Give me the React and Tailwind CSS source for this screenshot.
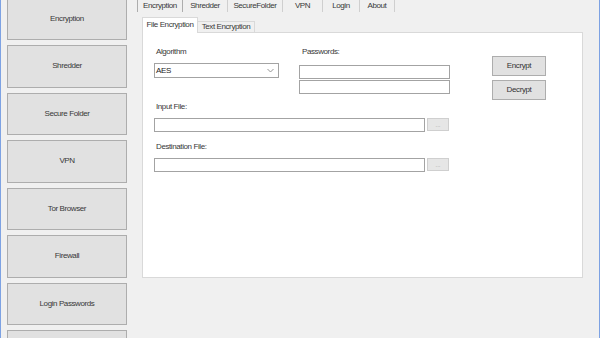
import React from 'react';

const font = { fontFamily: '"Liberation Sans", Arial, sans-serif' };

const sideItems = ['Encryption', 'Shredder', 'Secure Folder', 'VPN', 'Tor Browser', 'Firewall', 'Login Passwords', ''];

const topTabs = [
    { label: 'Encryption', w: 'w-[46px]', active: true },
    { label: 'Shredder', w: 'w-[45px]' },
    { label: 'SecureFolder', w: 'w-[55px]' },
    { label: 'VPN', w: 'w-[40px]' },
    { label: 'Login', w: 'w-[37px]' },
    { label: 'About', w: 'w-[35px]' },
];

const TextBox = ({ className = '' }) => (
    <div className={`h-[14px] bg-white border border-[#a3a3a3] ${className}`} />
);

const BrowseButton = () => (
    <div className="ml-[2px] w-[22px] h-[13px] bg-[#e6e6e6] border border-[#cfcfcf] flex items-center justify-center text-[6px] leading-none text-[#a0a0a0]">
        ...
    </div>
);

const FormButton = ({ children }) => (
    <div className="w-[54px] h-[20px] bg-[#e1e1e1] border border-[#adadad] flex items-center justify-center text-[8px] tracking-[-0.4px] text-[#333]">
        {children}
    </div>
);

const App = () => {
    return (
        <div style={font} className="w-[600px] h-[338px] bg-[#f0f0f0] border-x border-[#7da2e3] flex overflow-hidden text-[#383838]">
            {/* sidebar */}
            <div className="w-[136px] shrink-0 pl-[6px] -mt-[2.5px] flex flex-col gap-[5px]">
                {sideItems.map((item, i) => (
                    <div key={i} className="w-[120px] h-[42.5px] shrink-0 bg-[#e1e1e1] border border-[#adadad] flex items-center justify-center text-[8px] tracking-[-0.4px]">
                        {item}
                    </div>
                ))}
            </div>

            {/* main tab control */}
            <div className="flex-1 flex flex-col">
                <div className="h-[12px] flex">
                    {topTabs.map((t) => (
                        <div
                            key={t.label}
                            className={`${t.w} h-[12px] flex items-center justify-center text-[8px] tracking-[-0.4px] ${
                                t.active ? 'border-l border-r border-[#adadad] bg-[#f0f0f0]' : 'border-r border-[#cfcfcf]'
                            }`}
                        >
                            {t.label}
                        </div>
                    ))}
                </div>

                <div className="pl-[5px] pt-[5px]">
                    {/* inner tabs */}
                    <div className="flex items-end h-[16px] relative z-10">
                        <div className="w-[56px] h-[16px] bg-white border border-b-0 border-[#d9d9d9] flex items-center justify-center text-[8px] tracking-[-0.4px] pb-px">
                            File Encryption
                        </div>
                        <div className="w-[57px] h-[12px] bg-[#f0f0f0] border border-l-0 border-[#d9d9d9] flex items-center justify-center text-[8px] tracking-[-0.4px]">
                            Text Encryption
                        </div>
                    </div>

                    {/* tab page */}
                    <div className="-mt-px w-[441px] h-[246px] bg-white border border-[#d9d9d9] pl-[11px] pt-[13px]">
                        <div className="flex">
                            <div className="w-[125px]">
                                <div className="h-[12px] pl-[2px] flex items-center text-[8px] tracking-[-0.4px]">Algorithm</div>
                                <div className="mt-[5px] h-[15px] border border-[#a3a3a3] bg-white flex items-center justify-between pl-[1px] pr-[4px]">
                                    <span className="text-[8px] tracking-[-0.3px] text-[#222]">AES</span>
                                    <svg width="7" height="5" viewBox="0 0 7 5" fill="none">
                                        <path d="M0.5 1 L3.5 4 L6.5 1" stroke="#8a8a8a" strokeWidth="0.9" />
                                    </svg>
                                </div>
                            </div>

                            <div className="ml-[20px] w-[151px]">
                                <div className="h-[12px] pl-[3px] flex items-center text-[8px] tracking-[-0.4px]">Passwords:</div>
                                <TextBox className="mt-[7px]" />
                                <TextBox className="mt-[1px]" />
                            </div>

                            <div className="ml-[42px] pt-[10px] flex flex-col gap-[4px]">
                                <FormButton>Encrypt</FormButton>
                                <FormButton>Decrypt</FormButton>
                            </div>
                        </div>

                        <div className="mt-[1px] h-[12px] pl-[2px] flex items-center text-[8px] tracking-[-0.4px]">Input File:</div>
                        <div className="mt-[5px] flex items-start">
                            <TextBox className="w-[271px]" />
                            <BrowseButton />
                        </div>

                        <div className="mt-[9px] h-[12px] pl-[2px] flex items-center text-[8px] tracking-[-0.4px]">Destination File:</div>
                        <div className="mt-[5px] flex items-start">
                            <TextBox className="w-[271px]" />
                            <BrowseButton />
                        </div>
                    </div>
                </div>
            </div>
        </div>
    );
};

export default App;
